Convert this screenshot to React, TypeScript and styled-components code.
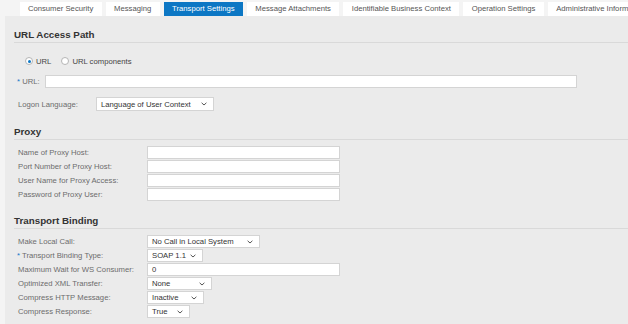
import React from "react";
import styled, { createGlobalStyle } from "styled-components";

const Global = createGlobalStyle`
  html, body { margin: 0; padding: 0; background: #f4f4f4; }
  body { font-family: "Liberation Sans", Arial, sans-serif; overflow: hidden; }
`;

const Page = styled.div`
  width: 628px;
  height: 324px;
  overflow: hidden;
  box-sizing: border-box;
  padding: 2px 0 0 5px;
  display: flex;
  flex-direction: column;
`;

const TabBar = styled.div`
  display: flex;
  gap: 4px;
  padding-left: 14.5px;
  height: 14px;
  flex: none;
  white-space: nowrap;
  overflow: hidden;
`;

const Tab = styled.div<{ $active?: boolean }>`
  flex: none;
  height: 14px;
  line-height: 14px;
  padding: 0 8.4px;
  font-size: 7.7px;
  background: ${(p) => (p.$active ? "#0c77c4" : "#ffffff")};
  color: ${(p) => (p.$active ? "#ffffff" : "#555555")};
`;

const Panel = styled.div`
  flex: 1;
  background: #ebebeb;
  padding-left: 9px;
  display: flex;
  flex-direction: column;
`;

const Heading = styled.div<{ $top: number }>`
  margin-top: ${(p) => p.$top}px;
  height: 14px;
  line-height: 14px;
  font-size: 9.8px;
  font-weight: bold;
  color: #333333;
  border-bottom: 1px solid #d9d9d9;
`;

const RadioRow = styled.div<{ $top: number }>`
  margin-top: ${(p) => p.$top}px;
  height: 14px;
  display: flex;
  align-items: center;
  padding-left: 11px;
  gap: 10px;
`;

const RadioOption = styled.label`
  display: flex;
  align-items: center;
  gap: 3px;
  font-size: 7.7px;
  color: #444444;
`;

const RadioCircle = styled.span<{ $checked?: boolean }>`
  width: 8px;
  height: 8px;
  box-sizing: border-box;
  border-radius: 50%;
  border: 1px solid #b5b5b5;
  background: #ffffff;
  display: flex;
  align-items: center;
  justify-content: center;
  &::after {
    content: "";
    width: 3px;
    height: 3px;
    border-radius: 50%;
    background: ${(p) => (p.$checked ? "#0c77c4" : "transparent")};
  }
`;

const Row = styled.div<{ $top?: number; $label: number }>`
  margin-top: ${(p) => p.$top ?? 1}px;
  height: 13px;
  display: grid;
  grid-template-columns: ${(p) => p.$label}px auto;
  align-items: center;
  padding-left: 4px;
`;

const Label = styled.span<{ $star?: boolean }>`
  font-size: 7.7px;
  color: #6b6b6b;
  white-space: nowrap;
  margin-left: ${(p) => (p.$star ? "-1px" : "0")};
`;

const Star = styled.span`
  color: #1a7ac9;
`;

const Input = styled.div<{ $w: number; $h?: number }>`
  width: ${(p) => p.$w}px;
  height: ${(p) => p.$h ?? 13}px;
  box-sizing: border-box;
  background: #ffffff;
  border: 1px solid #d4d4d4;
  font-size: 7.7px;
  color: #333333;
  line-height: ${(p) => (p.$h ?? 13) - 2}px;
  padding-left: 4px;
`;

const SelectBox = styled.div<{ $w: number; $h?: number }>`
  width: ${(p) => p.$w}px;
  height: ${(p) => p.$h ?? 13}px;
  box-sizing: border-box;
  background: #ffffff;
  border: 1px solid #d4d4d4;
  font-size: 7.7px;
  color: #333333;
  display: flex;
  align-items: center;
  justify-content: space-between;
  padding: 0 6px 0 4px;
  white-space: nowrap;
`;

const Chevron = () => (
  <svg width="6" height="4" viewBox="0 0 6 4">
    <polyline points="0.6,0.8 3,3 5.4,0.8" fill="none" stroke="#555" strokeWidth="1" />
  </svg>
);

const Select = ({ w, value, h }: { w: number; value: string; h?: number }) => (
  <SelectBox $w={w} $h={h}>
    <span>{value}</span>
    <Chevron />
  </SelectBox>
);

const tabs = [
  "Consumer Security",
  "Messaging",
  "Transport Settings",
  "Message Attachments",
  "Identifiable Business Context",
  "Operation Settings",
  "Administrative Information",
];

export default function App() {
  return (
    <>
      <Global />
      <Page>
        <TabBar>
          {tabs.map((t) => (
            <Tab key={t} $active={t === "Transport Settings"}>
              {t}
            </Tab>
          ))}
        </TabBar>
        <Panel>
          <Heading $top={12}>URL Access Path</Heading>
          <RadioRow $top={11}>
            <RadioOption>
              <RadioCircle $checked />
              URL
            </RadioOption>
            <RadioOption>
              <RadioCircle />
              URL components
            </RadioOption>
          </RadioRow>
          <Row $top={7} $label={27}>
            <Label $star>
              <Star>*</Star> URL:
            </Label>
            <Input $w={532} />
          </Row>
          <Row $top={9} $label={78}>
            <Label>Logon Language:</Label>
            <Select w={118} h={14} value="Language of User Context" />
          </Row>

          <Heading $top={15}>Proxy</Heading>
          <Row $top={6} $label={129}>
            <Label>Name of Proxy Host:</Label>
            <Input $w={193} />
          </Row>
          <Row $label={129}>
            <Label>Port Number of Proxy Host:</Label>
            <Input $w={193} />
          </Row>
          <Row $label={129}>
            <Label>User Name for Proxy Access:</Label>
            <Input $w={193} />
          </Row>
          <Row $label={129}>
            <Label>Password of Proxy User:</Label>
            <Input $w={193} />
          </Row>

          <Heading $top={13}>Transport Binding</Heading>
          <Row $top={6} $label={129}>
            <Label>Make Local Call:</Label>
            <Select w={113} value="No Call in Local System" />
          </Row>
          <Row $label={129}>
            <Label $star>
              <Star>*</Star> Transport Binding Type:
            </Label>
            <Select w={56} value="SOAP 1.1" />
          </Row>
          <Row $label={129}>
            <Label>Maximum Wait for WS Consumer:</Label>
            <Input $w={193}>0</Input>
          </Row>
          <Row $label={129}>
            <Label>Optimized XML Transfer:</Label>
            <Select w={65} value="None" />
          </Row>
          <Row $label={129}>
            <Label>Compress HTTP Message:</Label>
            <Select w={57} value="Inactive" />
          </Row>
          <Row $label={129}>
            <Label>Compress Response:</Label>
            <Select w={43} value="True" />
          </Row>
        </Panel>
      </Page>
    </>
  );
}
